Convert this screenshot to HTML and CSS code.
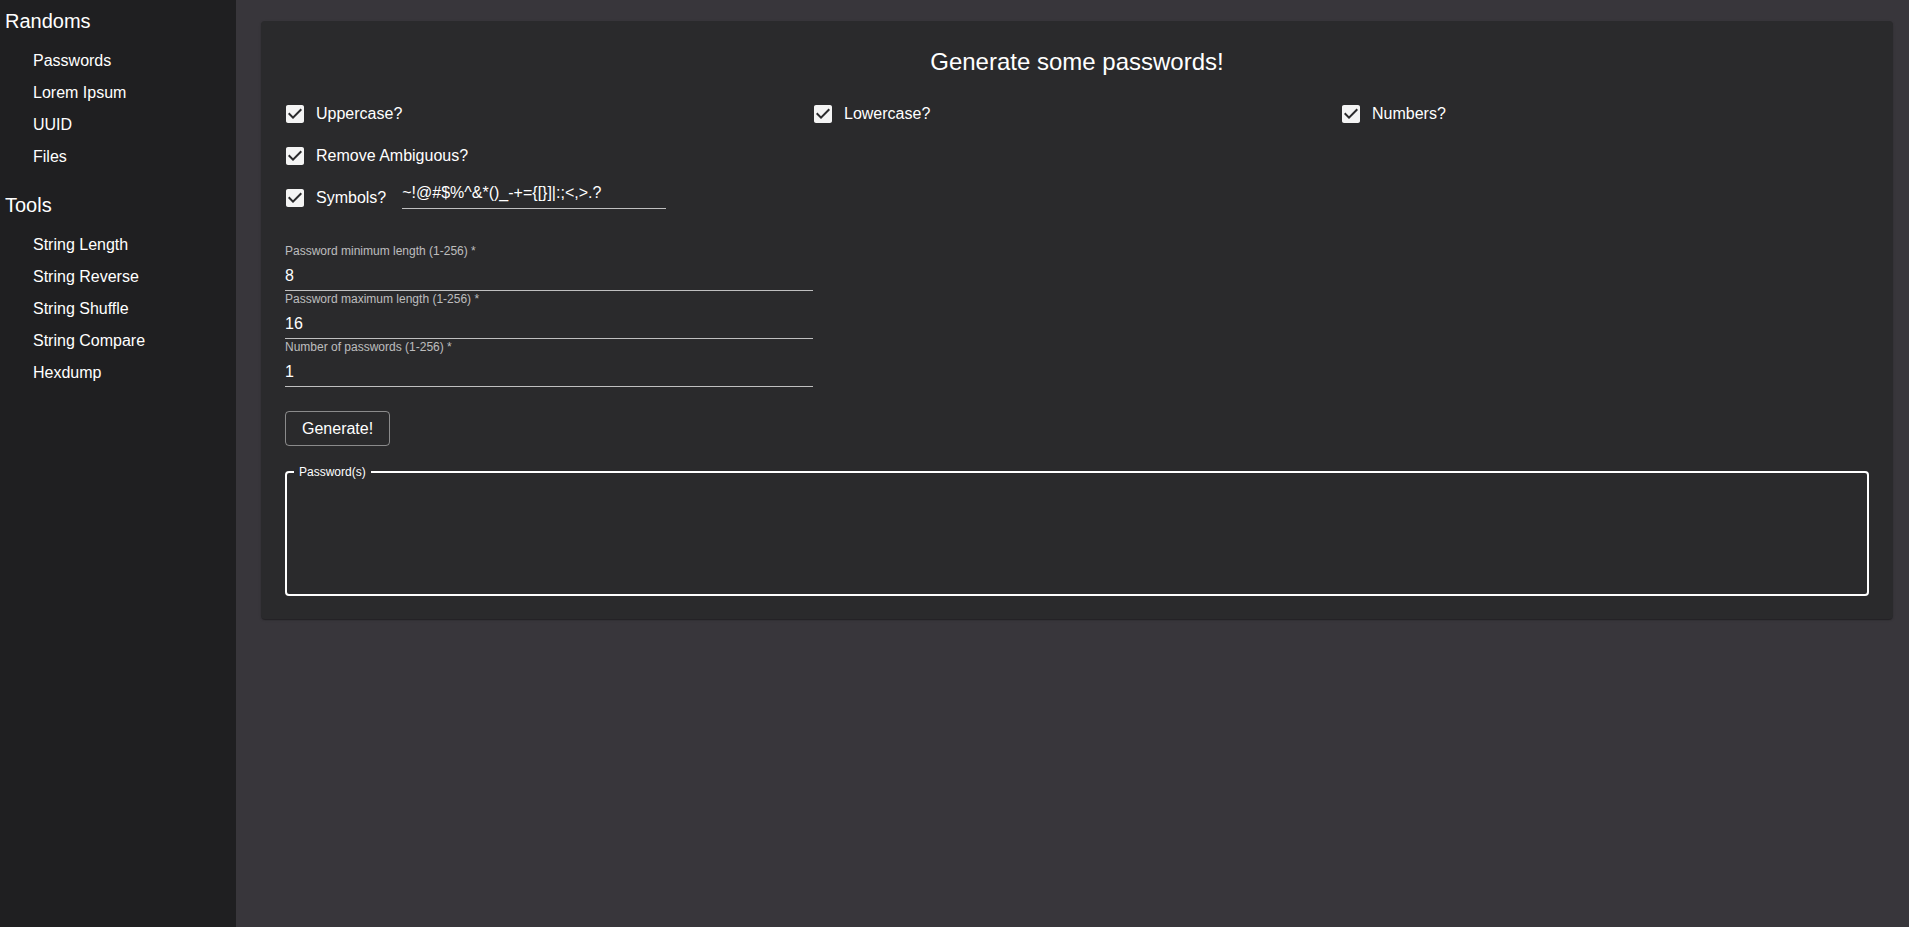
FILE: index.html
```html
<!DOCTYPE html>
<html lang="en">
<head>
<meta charset="utf-8">
<title>Randoms - Passwords</title>
<link rel="stylesheet" href="styles.css">
</head>
<body>
<div class="app">
  <nav class="sidebar">
    <section class="nav-section">
      <h3 class="nav-heading">Randoms</h3>
      <ul class="nav-list">
        <li>Passwords</li>
        <li>Lorem Ipsum</li>
        <li>UUID</li>
        <li>Files</li>
      </ul>
    </section>
    <section class="nav-section">
      <h3 class="nav-heading">Tools</h3>
      <ul class="nav-list">
        <li>String Length</li>
        <li>String Reverse</li>
        <li>String Shuffle</li>
        <li>String Compare</li>
        <li>Hexdump</li>
      </ul>
    </section>
  </nav>
  <main class="main">
    <div class="card">
      <h2 class="title">Generate some passwords!</h2>
      <div class="options">
        <label class="check"><span class="check-box"><svg viewBox="0 0 24 24" width="24" height="24"><path d="M19 3H5c-1.11 0-2 .9-2 2v14c0 1.1.89 2 2 2h14c1.11 0 2-.9 2-2V5c0-1.1-.89-2-2-2zm-9 14l-5-5 1.41-1.41L10 14.17l7.59-7.59L19 8l-9 9z"/></svg></span><span class="check-label">Uppercase?</span></label>
        <label class="check"><span class="check-box"><svg viewBox="0 0 24 24" width="24" height="24"><path d="M19 3H5c-1.11 0-2 .9-2 2v14c0 1.1.89 2 2 2h14c1.11 0 2-.9 2-2V5c0-1.1-.89-2-2-2zm-9 14l-5-5 1.41-1.41L10 14.17l7.59-7.59L19 8l-9 9z"/></svg></span><span class="check-label">Lowercase?</span></label>
        <label class="check"><span class="check-box"><svg viewBox="0 0 24 24" width="24" height="24"><path d="M19 3H5c-1.11 0-2 .9-2 2v14c0 1.1.89 2 2 2h14c1.11 0 2-.9 2-2V5c0-1.1-.89-2-2-2zm-9 14l-5-5 1.41-1.41L10 14.17l7.59-7.59L19 8l-9 9z"/></svg></span><span class="check-label">Numbers?</span></label>
        <div class="row-full">
          <label class="check"><span class="check-box"><svg viewBox="0 0 24 24" width="24" height="24"><path d="M19 3H5c-1.11 0-2 .9-2 2v14c0 1.1.89 2 2 2h14c1.11 0 2-.9 2-2V5c0-1.1-.89-2-2-2zm-9 14l-5-5 1.41-1.41L10 14.17l7.59-7.59L19 8l-9 9z"/></svg></span><span class="check-label">Remove Ambiguous?</span></label>
        </div>
        <div class="row-full symbols-row">
          <label class="check"><span class="check-box"><svg viewBox="0 0 24 24" width="24" height="24"><path d="M19 3H5c-1.11 0-2 .9-2 2v14c0 1.1.89 2 2 2h14c1.11 0 2-.9 2-2V5c0-1.1-.89-2-2-2zm-9 14l-5-5 1.41-1.41L10 14.17l7.59-7.59L19 8l-9 9z"/></svg></span><span class="check-label">Symbols?</span></label>
          <div class="input-box symbols-input"><span class="input-value">~!@#$%^&amp;*()_-+={[}]|:;&lt;,&gt;.?</span></div>
        </div>
      </div>
      <div class="fields">
        <div class="field">
          <div class="field-label">Password minimum length (1-256) *</div>
          <div class="input-box"><span class="input-value">8</span></div>
        </div>
        <div class="field">
          <div class="field-label">Password maximum length (1-256) *</div>
          <div class="input-box"><span class="input-value">16</span></div>
        </div>
        <div class="field">
          <div class="field-label">Number of passwords (1-256) *</div>
          <div class="input-box"><span class="input-value">1</span></div>
        </div>
      </div>
      <button class="btn" type="button">Generate!</button>
      <div class="output">
        <span class="output-label">Password(s)</span>
        <div class="output-area"></div>
      </div>
    </div>
  </main>
</div>
</body>
</html>
```

FILE: styles.css
```css
html, body {
  margin: 0;
  padding: 0;
  height: 100%;
}
body {
  font-family: "Liberation Sans", Arial, sans-serif;
  color: #ffffff;
  background: #38363b;
}
.app {
  display: flex;
  min-height: 100vh;
}
.sidebar {
  width: 236px;
  flex: 0 0 236px;
  background: #1f1f21;
  padding: 9px 0 0 5px;
  box-sizing: border-box;
}
.nav-section + .nav-section {
  margin-top: 20px;
}
.nav-heading {
  margin: 0 0 12px 0;
  font-size: 20px;
  line-height: 24px;
  font-weight: 400;
}
.nav-list {
  list-style: none;
  margin: 0;
  padding: 0 0 0 28px;
}
.nav-list li {
  font-size: 16px;
  line-height: 32px;
  height: 32px;
}
.main {
  flex: 1;
  padding: 21px 16px 0 25px;
  box-sizing: border-box;
}
.card {
  background: #2a2a2c;
  border-radius: 4px;
  padding: 24px 24px 23px 24px;
  box-shadow: 0 2px 1px -1px rgba(0,0,0,0.2), 0 1px 1px 0 rgba(0,0,0,0.14), 0 1px 3px 0 rgba(0,0,0,0.12);
}
.title {
  margin: 1px 0 15px 0;
  font-size: 24px;
  line-height: 32px;
  font-weight: 400;
  text-align: center;
}
.options {
  display: grid;
  grid-template-columns: repeat(3, 528px);
}
.row-full {
  grid-column: 1 / -1;
  display: flex;
  align-items: flex-start;
}
.check {
  display: inline-flex;
  align-items: center;
  margin-left: -11px;
  margin-right: 16px;
  height: 42px;
}
.check-box {
  display: inline-flex;
  padding: 9px;
}
.check-box svg {
  display: block;
  fill: #f4f4f4;
}
.check-label {
  font-size: 16px;
  line-height: 24px;
}
.input-box {
  height: 32px;
  box-sizing: border-box;
  padding: 4px 0 5px 0;
  border-bottom: 1px solid rgba(255,255,255,0.7);
}
.input-value {
  display: block;
  font-size: 16px;
  line-height: 23px;
  height: 22px;
  overflow: hidden;
  white-space: nowrap;
}
.symbols-input {
  width: 264px;
}
.fields {
  margin-top: 24px;
  width: 528px;
}
.field {
  height: 48px;
}
.field .input-box {
  padding: 5px 0 4px 0;
}
.field-label {
  font-size: 12px;
  line-height: 16px;
  color: rgba(255,255,255,0.7);
  white-space: nowrap;
}
.btn {
  display: block;
  margin-top: 24px;
  height: 35px;
  padding: 0 16px;
  font-family: "Liberation Sans", Arial, sans-serif;
  font-size: 16px;
  line-height: 23px;
  color: #ffffff;
  background: transparent;
  border: 1px solid rgba(255,255,255,0.45);
  border-radius: 4px;
}
.output {
  position: relative;
  margin-top: 25px;
  height: 125px;
  box-sizing: border-box;
  border: 2px solid #ffffff;
  border-radius: 4px;
}
.output-label {
  position: absolute;
  top: -8px;
  left: 7px;
  padding: 0 5px;
  font-size: 12px;
  line-height: 14px;
  background: #2a2a2c;
  color: #ffffff;
}
.output-area {
  padding: 14px 12px;
}
```
